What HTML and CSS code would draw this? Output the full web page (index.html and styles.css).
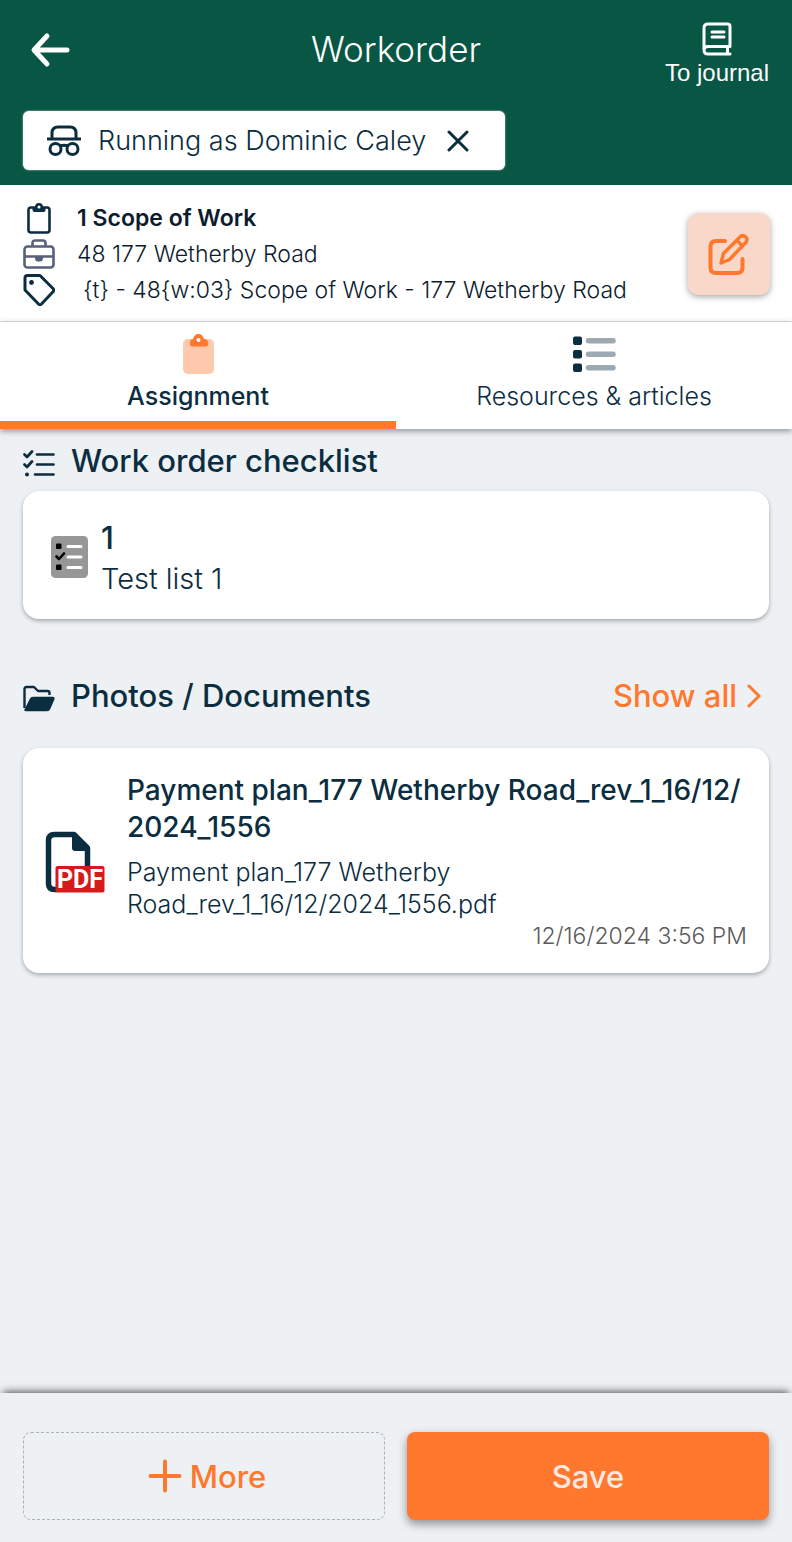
FILE: index.html
```html
<!DOCTYPE html>
<html lang="en">
<head>
    <meta charset="UTF-8">
    <meta name="viewport" content="width=device-width, initial-scale=1.0">
    <title>Workorder</title>
    <link rel="stylesheet" href="styles.css">
</head>
<body>
    <header class="header">
        <div class="header-bar">
            <button class="back" aria-label="Back">
                <svg width="40" height="36" viewBox="0 0 40 36" fill="none" stroke="currentColor" stroke-width="5" stroke-linecap="round" stroke-linejoin="round">
                    <path d="M37 18H5M17 4L4 18l13 14"/>
                </svg>
            </button>
            <h1>Workorder</h1>
            <a class="journal" href="#">
                <svg width="30" height="34" viewBox="0 0 30 34" fill="none" stroke="currentColor" stroke-width="3" stroke-linecap="round" stroke-linejoin="round">
                    <path d="M28 24V4.500Q28 2 25.500 2H6Q2 2 2 6v22q0 4 4 4h22M6 24.500h22M6 24.500q-4 0-4 3.500M25.500 25v7M10 10h12M10 15h12"/>
                </svg>
                <span>To journal</span>
            </a>
        </div>
        <div class="chip">
            <svg width="34" height="32" viewBox="0 0 34 32" fill="none" stroke="currentColor" stroke-width="3">
                <path d="M5 14V8q0-6 6-6h12q6 0 6 6v6M0 14h34"/>
                <circle cx="8.500" cy="24" r="5.500"/>
                <circle cx="25.500" cy="24" r="5.500"/>
                <path d="M13 21q4-1.500 8 0"/>
            </svg>
            <span>Running as Dominic Caley</span>
            <button class="chip-close" aria-label="Stop running as">
                <svg width="22" height="22" viewBox="0 0 22 22" fill="none" stroke="currentColor" stroke-width="3" stroke-linecap="round">
                    <path d="M2 2l18 18M20 2L2 20"/>
                </svg>
            </button>
        </div>
    </header>

    <section class="info">
        <ul class="info-list">
            <li class="info-name">
                <svg width="32" height="32" viewBox="0 0 32 32" fill="none" stroke="#0b2d40" stroke-width="2.600">
                    <rect x="5.500" y="5.500" width="21" height="25" rx="2.500"/>
                    <path fill="#0b2d40" stroke="none" d="M9.500 5H12a4 4 0 0 1 8 0h2.500v3q0 2-2 2h-9q-2 0-2-2z"/>
                    <circle cx="16" cy="5" r="1.500" fill="#fff" stroke="none"/>
                </svg>
                <span>1 Scope of Work</span>
            </li>
            <li>
                <svg width="32" height="32" viewBox="0 0 32 32" fill="none" stroke="#59617a" stroke-width="2.600">
                    <rect x="1.500" y="8.500" width="29" height="21" rx="3"/>
                    <path d="M9.500 8V5q0-2.500 2.500-2.500h8q2.500 0 2.500 2.500v3M2 18.500h28"/>
                    <path fill="#59617a" stroke="none" d="M12 19h8v1q0 3.500-3 3.500h-2q-3 0-3-3.500z"/>
                </svg>
                <span>48 177 Wetherby Road</span>
            </li>
            <li>
                <svg width="32" height="32" viewBox="0 0 32 32" fill="none" stroke="#0b2d40" stroke-width="3" stroke-linejoin="round">
                    <path d="M2 4q0-2.500 2.500-2.500H17L30 14.500q1.500 1.700 0 3.300L18.500 30q-1.500 1.500-3 0L2 16z"/>
                    <circle cx="8.500" cy="8.500" r="2.400" fill="#0b2d40" stroke="none"/>
                </svg>
                <span class="tag-text">{t} - 48{w:03} Scope of Work - 177 Wetherby Road</span>
            </li>
        </ul>
        <button class="edit" aria-label="Edit">
            <svg width="42" height="42" viewBox="0 0 42 42" fill="none" stroke="currentColor" stroke-width="4" stroke-linecap="round" stroke-linejoin="round">
                <path d="M17 8H8Q2.500 8 2.500 13.500v21Q2.500 40 8 40h21q5.500 0 5.500-5.500V26"/>
                <path stroke-width="3.500" d="M13 30l2.500-9.500L32.500 3.500Q35 1.500 37.500 3.800t.7 5.200L21.500 26.500zM29 7.500l5.500 5.500"/>
            </svg>
        </button>
    </section>

    <nav class="tabs">
        <a class="tab active" href="#assignment">
            <svg width="44" height="42" viewBox="0 0 44 42">
                <rect x="7" y="6" width="31" height="35" rx="5" fill="#ffc9ad"/>
                <path fill="#ff782d" d="M14 10q0-4 3-4 1.500-5 5.500-5T28 6q4 0 4 4v1.500q0 2-2 2H16q-2 0-2-2z"/>
                <circle cx="22.500" cy="7" r="2" fill="#fff"/>
            </svg>
            <span>Assignment</span>
        </a>
        <a class="tab" href="#resources">
            <svg width="44" height="42" viewBox="0 0 44 42">
                <g fill="#0b2d40">
                    <rect x="1" y="3.500" width="9" height="8.500" rx="2"/>
                    <rect x="1" y="17" width="9" height="8.500" rx="2"/>
                    <rect x="1" y="30.500" width="9" height="8.500" rx="2"/>
                </g>
                <path stroke="#9daab2" stroke-width="5.500" stroke-linecap="round" d="M16.500 7.700h24.500M16.500 21.200h24.500M16.500 34.700h24.500"/>
            </svg>
            <span>Resources &amp; articles</span>
        </a>
    </nav>

    <main class="content">
        <section>
            <div class="section-head">
                <svg class="section-icon" width="32" height="28" viewBox="0 0 32 28" fill="none" stroke="#0b2d40" stroke-width="2.700" stroke-linecap="round" stroke-linejoin="round">
                    <path d="M1.500 5.500l2.500 2.500L9 2.500M1.500 15.500L4 18l5-5.500M14 5.500h16.500M14 15.500h16.500M12 25.500h18.500"/>
                    <circle cx="4" cy="25.500" r="2" fill="#0b2d40" stroke="none"/>
                </svg>
                <h2>Work order checklist</h2>
            </div>
            <div class="card checklist">
                <svg width="38" height="44" viewBox="0 0 38 44">
                    <rect x="0" y="0" width="37" height="42" rx="4.500" fill="#979797"/>
                    <rect x="5" y="7.500" width="5.500" height="5.500" rx="1"/>
                    <rect x="5" y="28.500" width="5.500" height="5.500" rx="1"/>
                    <path fill="none" stroke="#000" stroke-width="2.600" stroke-linecap="round" stroke-linejoin="round" d="M5.500 20.500L8 23l5-5.500"/>
                    <path stroke="#fff" stroke-width="3" stroke-linecap="round" d="M17 10.500h13M17 21h13M17 31.500h13"/>
                </svg>
                <div>
                    <h3>1</h3>
                    <p>Test list 1</p>
                </div>
            </div>
        </section>

        <section>
            <div class="section-head documents-head">
                <svg class="section-icon" width="32" height="28" viewBox="0 0 32 28" fill="none" stroke="#0b2d40" stroke-width="2.400" stroke-linejoin="round">
                    <path d="M1.500 24V5q0-2 2-2h7.500l4 4h9.500q2 0 2 2v2"/>
                    <path fill="#0b2d40" stroke-width="1.500" d="M2 26l5.500-11q.7-1.500 2.500-1.500h19.500q2 0 1.200 1.800L26.500 25q-.7 1.500-2.500 1.500H3q-1 0-1-.5z"/>
                </svg>
                <h2>Photos / Documents</h2>
                <a class="show-all" href="#documents">
                    <span>Show all</span>
                    <svg width="14" height="24" viewBox="0 0 14 24" fill="none" stroke="currentColor" stroke-width="3" stroke-linecap="round" stroke-linejoin="round">
                        <path d="M2 2l10 10L2 22"/>
                    </svg>
                </a>
            </div>
            <div class="card document">
                <svg width="60" height="62" viewBox="0 0 60 62">
                    <path fill="none" stroke="#0b2d40" stroke-width="5.500" stroke-linejoin="round" d="M12 58.500H9.500Q3.500 58.500 3.500 52.500V9.500Q3.500 3.500 9.500 3.500H29L42.500 17v20"/>
                    <path fill="#0b2d40" d="M27 3h4l13 13v4H30q-3 0-3-3z"/>
                    <rect x="10.500" y="35" width="49" height="26.500" rx="2" fill="#d51a1c"/>
                    <text x="35" y="57" text-anchor="middle" class="pdf-text">PDF</text>
                </svg>
                <div class="document-body">
                    <h3>Payment plan_177 Wetherby Road_rev_1_16/12/<wbr>2024_1556</h3>
                    <p>Payment plan_177 Wetherby Road_rev_1_16/12/2024_1556.pdf</p>
                    <time datetime="2024-12-16T15:56">12/16/2024 3:56 PM</time>
                </div>
            </div>
        </section>
    </main>

    <footer class="footer">
        <button class="more">
            <svg width="34" height="34" viewBox="0 0 34 34" stroke="currentColor" stroke-width="4" stroke-linecap="round">
                <path d="M17 2.500v29M2.500 17h29"/>
            </svg>
            <span>More</span>
        </button>
        <button class="save">Save</button>
    </footer>
</body>
</html>
```

FILE: styles.css
```css
* {
    margin: 0;
    padding: 0;
    box-sizing: border-box;
}

body {
    font-family: Inter, "Liberation Sans", sans-serif;
    min-height: 100vh;
    display: flex;
    flex-direction: column;
    background: #edf1f4;
    color: #0b2d40;
}

button {
    font-family: inherit;
    color: inherit;
    border: none;
    background: none;
    cursor: pointer;
}

a {
    color: inherit;
    text-decoration: none;
}

svg {
    display: block;
    flex-shrink: 0;
}

.header {
    background: #085644;
    padding: 22px 23px 15px;
}

.header-bar {
    display: grid;
    grid-template-columns: 1fr auto 1fr;
    align-items: start;
    height: 89px;
    color: white;
}

.back {
    justify-self: start;
    padding: 10px 7px;
}

.header h1 {
    font-size: 35px;
    font-weight: 300;
    line-height: 54px;
}

.journal {
    justify-self: end;
    display: flex;
    flex-direction: column;
    align-items: center;
    gap: 3px;
    font-family: "Liberation Sans", sans-serif;
    font-size: 24px;
    line-height: 28px;
}

.chip {
    display: inline-flex;
    align-items: center;
    gap: 17px;
    height: 59px;
    padding: 0 32px 0 24px;
    background: white;
    border-radius: 6px;
    box-shadow: 0 0 2px rgba(255, 255, 255, 0.8);
    font-size: 27px;
    font-weight: 300;
}

.chip-close {
    padding: 4px;
}

.info {
    display: flex;
    align-items: center;
    justify-content: space-between;
    gap: 16px;
    padding: 15px 22px 13px 23px;
    background: white;
    border-bottom: 1px solid #dfe4e8;
}

.info-list {
    list-style: none;
    font-size: 23px;
    font-weight: 300;
    color: #0c1c2e;
}

.info-list li {
    display: flex;
    align-items: center;
    gap: 22px;
    line-height: 36px;
}

.info-list .info-name {
    font-weight: 600;
}

.tag-text {
    padding-left: 6px;
}

.edit {
    display: grid;
    place-items: center;
    width: 82px;
    height: 82px;
    flex-shrink: 0;
    border-radius: 10px;
    background: #f9d8c9;
    color: #ff782d;
    box-shadow: 0 2px 6px rgba(0, 0, 0, 0.35);
}

.tabs {
    display: grid;
    grid-template-columns: 1fr 1fr;
    background: white;
    box-shadow: 0 2px 6px rgba(0, 0, 0, 0.4);
}

.tab {
    display: flex;
    flex-direction: column;
    align-items: center;
    padding: 11px 0 4px;
    border-bottom: 8px solid transparent;
    font-size: 25px;
    font-weight: 300;
    line-height: 42px;
}

.tab.active {
    border-color: #ff782d;
    font-weight: 500;
}

.content {
    flex: 1;
    padding: 0 23px 22px;
}

.section-head {
    display: flex;
    align-items: center;
    gap: 16px;
    height: 62px;
}

.section-head h2 {
    font-size: 31px;
    font-weight: 500;
}

.section-icon {
    margin-top: 5px;
}

.documents-head {
    height: 129px;
    padding-top: 24px;
}

.show-all {
    display: flex;
    align-items: center;
    gap: 10px;
    margin-left: auto;
    padding-right: 8px;
    color: #ff782d;
    font-size: 31px;
    font-weight: 500;
}

.card {
    display: flex;
    align-items: center;
    background: white;
    border-radius: 16px;
    box-shadow: 0 2px 4px rgba(0, 0, 0, 0.3);
}

.checklist {
    gap: 12px;
    padding: 26px 28px 20px;
}

.checklist h3 {
    font-size: 31px;
    font-weight: 500;
    line-height: 42px;
}

.checklist p {
    font-size: 29px;
    font-weight: 300;
    line-height: 40px;
}

.document {
    gap: 22px;
    padding: 24px 22px 21px;
}

.document-body {
    flex: 1;
    display: flex;
    flex-direction: column;
}

.document h3 {
    font-size: 28px;
    font-weight: 500;
    line-height: 37px;
    margin-bottom: 10px;
}

.document p {
    font-size: 25px;
    font-weight: 300;
    line-height: 32px;
}

.document time {
    align-self: flex-end;
    font-size: 23px;
    font-weight: 300;
    line-height: 32px;
    color: #5b5b5b;
}

.pdf-text {
    font-family: Roboto, sans-serif;
    font-size: 25px;
    font-weight: 700;
    fill: white;
}

.footer {
    display: grid;
    grid-template-columns: 1fr 1fr;
    gap: 22px;
    padding: 39px 23px 22px;
    background: #edf1f4;
    box-shadow: 0 -4px 8px -3px rgba(0, 0, 0, 0.7);
}

.more,
.save {
    display: flex;
    align-items: center;
    justify-content: center;
    gap: 8px;
    height: 88px;
    border-radius: 8px;
    font-size: 31px;
    font-weight: 500;
}

.more {
    padding-left: 6px;
    border: 1px dashed #a9b4ba;
    color: #ff782d;
}

.save {
    background: #ff782d;
    color: #f9e9e3;
    box-shadow: 0 4px 10px rgba(0, 0, 0, 0.4);
}
```
